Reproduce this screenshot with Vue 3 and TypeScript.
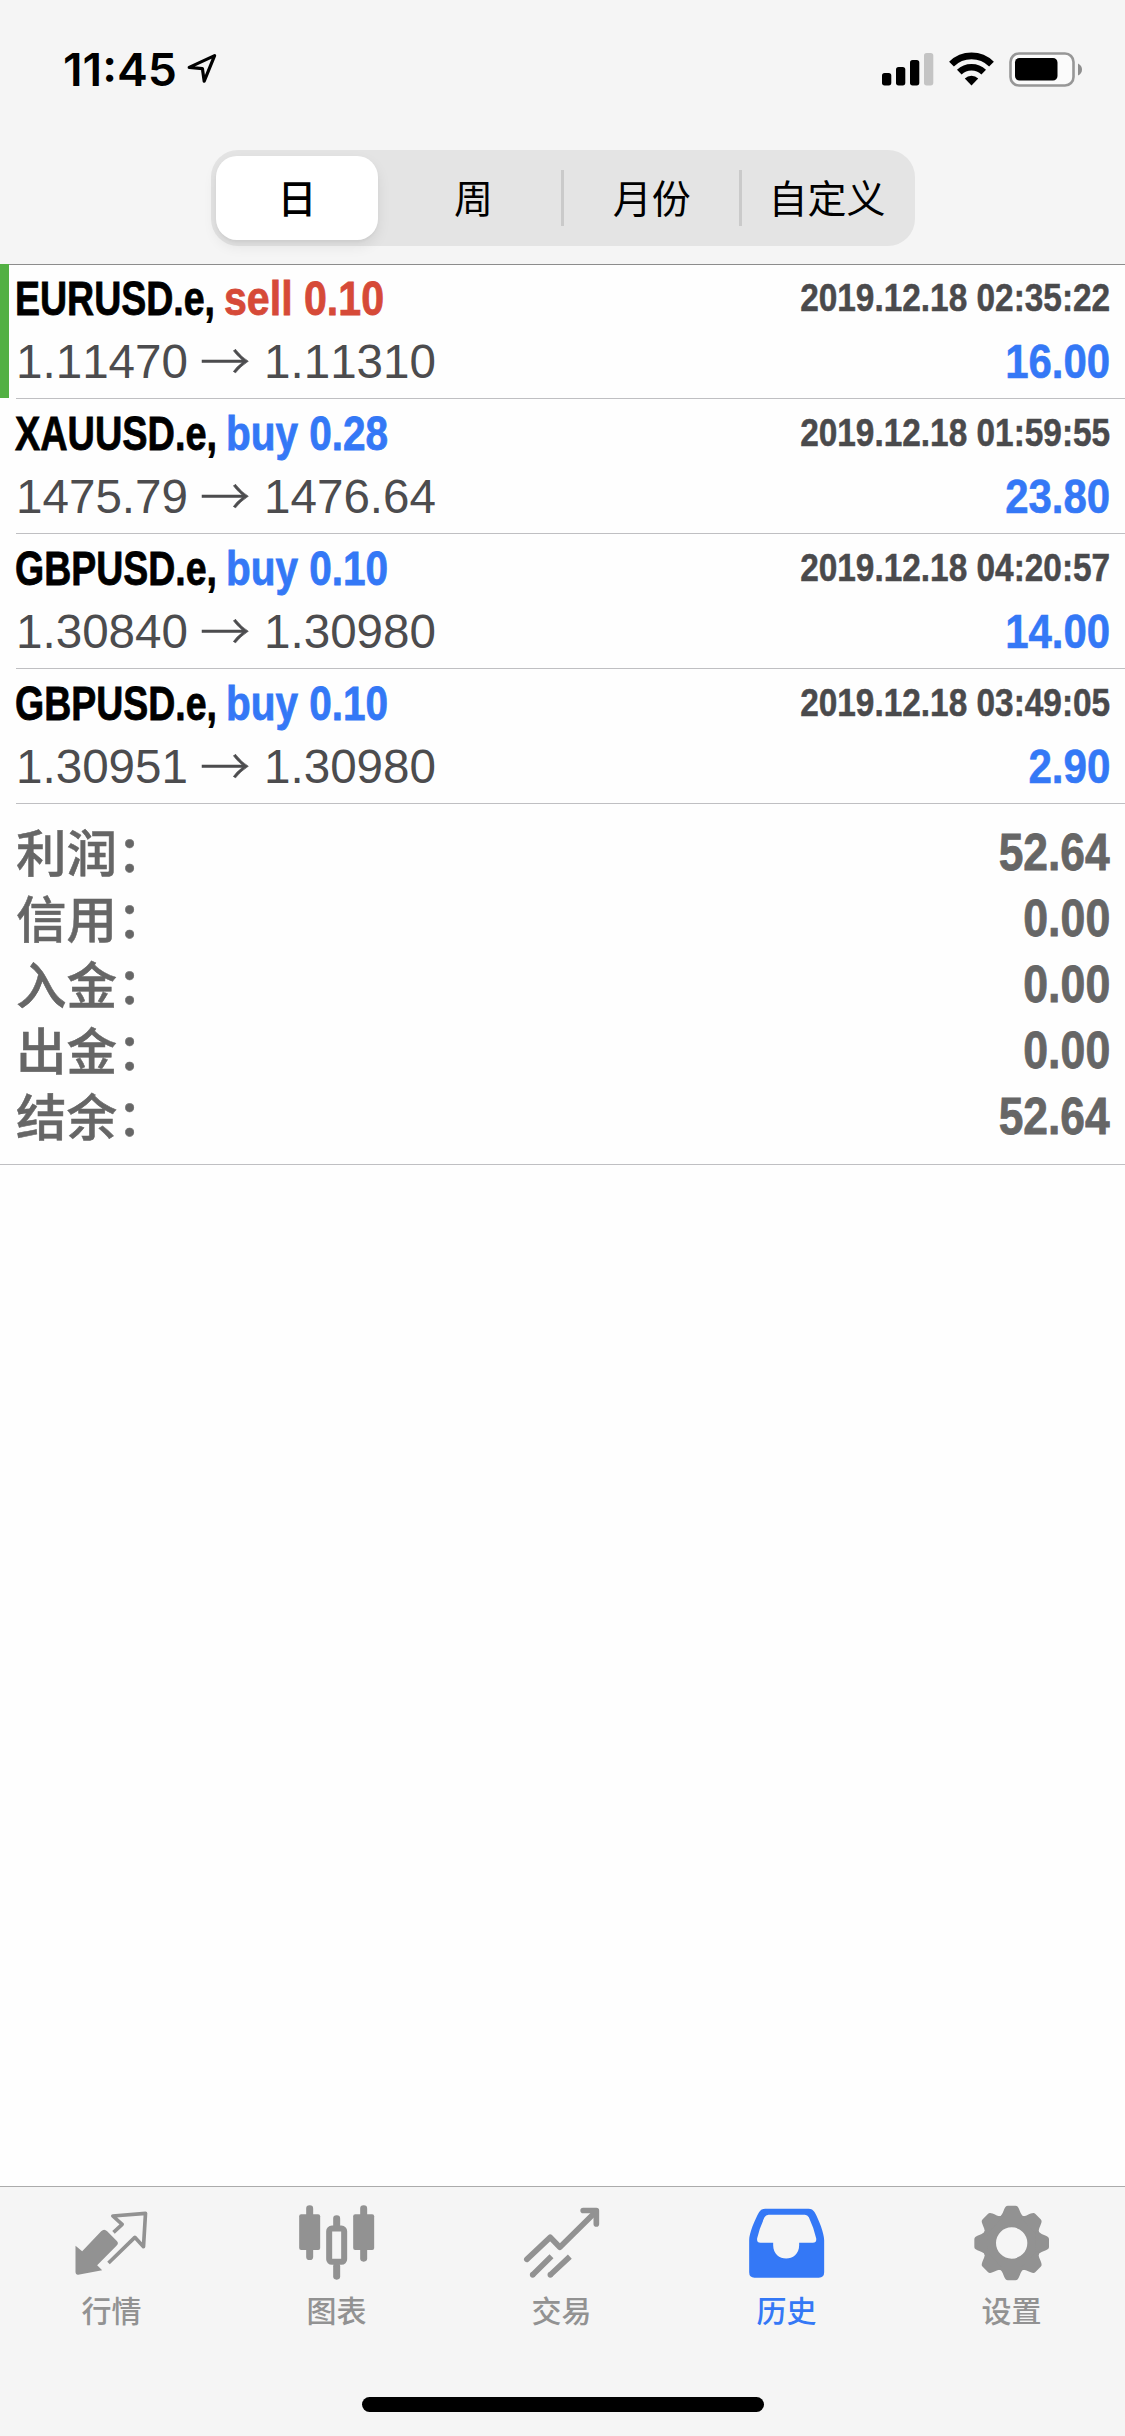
<script setup lang="ts">
import { ref } from 'vue'
import type { Directive } from 'vue'

interface Deal {
  symbol: string
  symbolWidth: number
  side: 'buy' | 'sell'
  volume: string
  actionWidth: number
  open: string
  close: string
  time: string
  profit: string
  profitWidth: number
  marked?: boolean
}

interface TotalRow {
  label: string
  value: string
  width: number
}

const deals: Deal[] = [
  { symbol: 'EURUSD.e,', symbolWidth: 200, side: 'sell', volume: '0.10', actionWidth: 160, open: '1.11470', close: '1.11310', time: '2019.12.18 02:35:22', profit: '16.00', profitWidth: 105, marked: true },
  { symbol: 'XAUUSD.e,', symbolWidth: 202, side: 'buy', volume: '0.28', actionWidth: 162, open: '1475.79', close: '1476.64', time: '2019.12.18 01:59:55', profit: '23.80', profitWidth: 105 },
  { symbol: 'GBPUSD.e,', symbolWidth: 202, side: 'buy', volume: '0.10', actionWidth: 162, open: '1.30840', close: '1.30980', time: '2019.12.18 04:20:57', profit: '14.00', profitWidth: 105 },
  { symbol: 'GBPUSD.e,', symbolWidth: 202, side: 'buy', volume: '0.10', actionWidth: 162, open: '1.30951', close: '1.30980', time: '2019.12.18 03:49:05', profit: '2.90', profitWidth: 82 },
]

const totals: TotalRow[] = [
  { label: '利润：', value: '52.64', width: 111 },
  { label: '信用：', value: '0.00', width: 87 },
  { label: '入金：', value: '0.00', width: 87 },
  { label: '出金：', value: '0.00', width: 87 },
  { label: '结余：', value: '52.64', width: 111 },
]

const periods = ['日', '周', '月份', '自定义']
const activePeriod = ref(0)

const toothAngles = [0, 45, 90, 135, 180, 225, 270, 315]

/* Condenses a piece of text horizontally to the given width. */
const vFit: Directive<HTMLElement, number> = {
  mounted(el, binding) {
    const natural = el.getBoundingClientRect().width
    if (!natural) return
    const side = binding.modifiers.end ? 'left' : 'right'
    el.style.transformOrigin = binding.modifiers.end ? '100% 50%' : '0 50%'
    el.style.transform = `scaleX(${binding.value / natural})`
    el.style.setProperty(`margin-${side}`, `${binding.value - natural}px`)
  },
}
</script>

<template>
  <div class="screen">
    <header class="top">
      <div class="status">
        <div class="status-left">
          <span v-fit="114" class="clock">11:45</span>
          <svg class="loc" width="31" height="31" viewBox="0 0 31 31">
            <path d="M2.2 14.4 L27.6 2.6 L17.2 28.2 L15.4 15.6 Z" fill="none" stroke="#000" stroke-width="3.2" stroke-linejoin="round" />
          </svg>
        </div>
        <div class="status-right">
          <svg width="52" height="34" viewBox="0 0 52 34">
            <rect x="0" y="21" width="9.3" height="12.4" rx="2.6" />
            <rect x="14" y="15" width="9.3" height="18.4" rx="2.6" />
            <rect x="28" y="8" width="9.3" height="25.4" rx="2.6" />
            <rect x="42" y="1" width="9.3" height="32.4" rx="2.6" fill="#c4c4c4" />
          </svg>
          <svg class="wifi" width="45" height="34" viewBox="0 0 45 34">
            <path d="M2.5 12.1 A28.5 28.5 0 0 1 42.5 12.1" fill="none" stroke="#000" stroke-width="6.8" />
            <path d="M10.3 20.2 A17.5 17.5 0 0 1 34.7 20.2" fill="none" stroke="#000" stroke-width="6.6" />
            <path d="M22.5 33.5 L15.8 26.4 A9.8 9.8 0 0 1 29.2 26.4 Z" />
          </svg>
          <svg class="battery" width="74" height="35" viewBox="0 0 74 35">
            <rect x="1.5" y="1.5" width="63" height="32" rx="8.5" fill="#fbfbfb" stroke="#979797" stroke-width="2.6" />
            <rect x="6" y="6" width="42.5" height="22.6" rx="4.5" />
            <path d="M69 11.5 Q73 13.5 73 17.5 Q73 21.5 69 23.5 Z" fill="#8e8e8e" />
          </svg>
        </div>
      </div>
      <nav class="segments">
        <button
          v-for="(period, i) in periods"
          :key="period"
          type="button"
          class="segment"
          :class="{ active: i === activePeriod, divided: i > activePeriod + 1 }"
          @click="activePeriod = i"
        >
          <span>{{ period }}</span>
        </button>
      </nav>
    </header>

    <main class="content">
      <section class="deals">
        <article v-for="(deal, i) in deals" :key="i" class="deal" :class="{ marked: deal.marked }">
          <div class="bar"></div>
          <div class="deal-body">
            <div class="line first">
              <div class="title">
                <span v-fit="deal.symbolWidth" class="symbol">{{ deal.symbol }}</span>
                <span v-fit="deal.actionWidth" class="action" :class="deal.side">{{ deal.side }} {{ deal.volume }}</span>
              </div>
              <span v-fit.end="310" class="time">{{ deal.time }}</span>
            </div>
            <div class="line second">
              <div class="prices">
                <span v-fit="172">{{ deal.open }}</span>
                <span class="arrow">→</span>
                <span v-fit="172">{{ deal.close }}</span>
              </div>
              <span v-fit.end="deal.profitWidth" class="profit">{{ deal.profit }}</span>
            </div>
          </div>
        </article>
      </section>

      <section class="totals">
        <div v-for="row in totals" :key="row.label" class="total">
          <span class="total-label">{{ row.label }}</span>
          <span v-fit.end="row.width" class="total-value">{{ row.value }}</span>
        </div>
      </section>
    </main>

    <footer class="bottom">
      <nav class="tabs">
        <a class="tab">
          <svg width="80" height="80" viewBox="215.5 100 240 240">
            <path d="M226 228 L246 245 L303 185 Q312 176 321 185 L350 214 Q357 221 349 228 L291 287 L306 302 L234 315 Q226 316 226 308 Z" fill="currentColor" />
            <path d="M340 188 L366 164 L338 139 L436 131 L430 231 L404 203 L325 280" fill="none" stroke="currentColor" stroke-width="11" stroke-linejoin="round" />
          </svg>
          <span>行情</span>
        </a>
        <a class="tab">
          <svg width="80" height="80" viewBox="890.5 100 240 240" fill="currentColor">
            <rect x="918" y="107" width="21" height="164" rx="10" />
            <rect x="897" y="134" width="63" height="107" rx="6" />
            <rect x="1080" y="107" width="21" height="169" rx="10" />
            <rect x="1059" y="134" width="63" height="107" rx="6" />
            <rect x="999" y="137" width="21" height="40" rx="10" />
            <rect x="999" y="280" width="21" height="50" rx="10" />
            <rect x="987" y="176.500" width="45" height="100" rx="8" fill="none" stroke="currentColor" stroke-width="18" />
          </svg>
          <span>图表</span>
        </a>
        <a class="tab">
          <svg width="80" height="80" viewBox="365.5 100 240 240" fill="none" stroke="currentColor" stroke-width="17">
            <path d="M380 269 L450 203 L479 233 L586 127" stroke-linejoin="round" stroke-linecap="round" />
            <path d="M549 122.500 H588.500 V163" stroke-linejoin="round" stroke-linecap="round" />
            <path d="M397 316 L454 260 M450 316 L509 261" />
            <circle cx="397.500" cy="315.500" r="8.500" fill="currentColor" stroke="none" />
            <circle cx="450.500" cy="315.500" r="8.500" fill="currentColor" stroke="none" />
          </svg>
          <span>交易</span>
        </a>
        <a class="tab selected">
          <svg width="80" height="80" viewBox="140.500 100 240 240" fill="currentColor">
            <path
              fill-rule="evenodd"
              d="M147 212 C147 190 164 150 177 127 Q183 117 195 117 H325 Q337 117 343 127 C356 150 372 190 372 212 V308 Q372 324 356 324 H163 Q147 324 147 308 Z M205 135 Q197 135 193 143 Q178 175 171 206 Q169 219 181 219 H219 V227 C219 280 297 280 297 227 V219 H338 Q350 219 348 206 Q341 175 326 143 Q322 135 314 135 Z"
            />
          </svg>
          <span>历史</span>
        </a>
        <a class="tab">
          <svg width="80" height="80" viewBox="-119 -120 240 240" fill="currentColor">
            <circle r="67.500" fill="none" stroke="currentColor" stroke-width="41" />
            <path
              v-for="angle in toothAngles"
              :key="angle"
              :transform="`rotate(${angle})`"
              d="M-38 -72 L-38 -79 Q-31 -80 -27 -90 Q-21 -106 -18 -109 Q-16 -112 -11 -112 H11 Q16 -112 18 -109 Q21 -106 27 -90 Q31 -80 38 -79 L38 -72 Z"
            />
          </svg>
          <span>设置</span>
        </a>
      </nav>
      <div class="home"></div>
    </footer>
  </div>
</template>

<style>
body {
  margin: 0;
  background: #fefefe;
}
</style>

<style scoped>
.screen {
  display: flex;
  flex-direction: column;
  width: 1125px;
  height: 2436px;
  overflow: hidden;
  background: #fefefe;
  font-family: "Liberation Sans", "Noto Sans CJK SC", sans-serif;
  font-kerning: none;
}

.top {
  box-sizing: border-box;
  height: 265px;
  flex: none;
  background: #f5f5f5;
  border-bottom: 1px solid #8c8c8c;
}

.status {
  box-sizing: border-box;
  display: flex;
  justify-content: space-between;
  height: 150px;
  padding: 52px 42px 0 63px;
}

.status-left,
.status-right {
  display: flex;
  align-items: flex-start;
}

.clock {
  display: inline-block;
  font-family: Inter, sans-serif;
  font-size: 45px;
  font-weight: 600;
  line-height: 35px;
}

.loc {
  margin: 1px 0 0 10px;
}

.wifi {
  margin-left: 15px;
}

.battery {
  margin-left: 15px;
}

.segments {
  box-sizing: border-box;
  display: flex;
  width: 704px;
  height: 96px;
  margin: 0 0 0 210.5px;
  border-radius: 27px;
  background: #e4e4e4;
}

.segment {
  display: flex;
  flex: 1;
  align-items: center;
  justify-content: center;
  padding: 3px 0 0;
  border: 0;
  background: none;
  color: #000;
  font-family: inherit;
  font-size: 39px;
  line-height: 50px;
}

.segment.active {
  flex: none;
  width: 162px;
  height: 84px;
  margin: 6px 8px 6px 5.5px;
  border-radius: 21px;
  background: #fff;
  box-shadow: 0 6px 14px rgba(0, 0, 0, 0.08), 0 2px 3px rgba(0, 0, 0, 0.04);
  font-weight: 500;
}

.segment.divided {
  background: linear-gradient(#cacaca, #cacaca) 0 20px / 3px 56px no-repeat;
}

.segment.divided:nth-child(3) {
  padding-left: 3px;
}

.content {
  flex: 1;
}

.deals {
  margin-top: -1px;
}

.deal {
  display: flex;
  height: 135px;
}

.bar {
  width: 9px;
  height: 134px;
}

.marked .bar {
  background: #52b043;
}

.deal-body {
  box-sizing: border-box;
  flex: 1;
  margin-left: 7px;
  padding-right: 15px;
  border-bottom: 1px solid #bfbfc2;
}

.line {
  display: flex;
  justify-content: space-between;
  font-size: 48px;
  white-space: nowrap;
}

.line span {
  display: inline-block;
}

.first {
  height: 69px;
  line-height: 69px;
  font-weight: 700;
}

.title {
  display: flex;
  gap: 9px;
  margin-left: -1px;
}

.symbol,
.action {
  -webkit-text-stroke: 0.8px currentColor;
}

.symbol {
  color: #000;
}

.sell {
  color: #d64a38;
}

.buy {
  color: #3478f6;
}

.time {
  color: #4a4a4c;
  font-size: 39px;
  line-height: 67px;
  -webkit-text-stroke: 0.5px currentColor;
}

.second {
  line-height: 57px;
}

.prices {
  display: flex;
  color: #4c4c4e;
}

.prices .arrow {
  width: 50px;
  margin: 0 14px 0 12px;
  font-family: "Noto Sans CJK SC", sans-serif;
  font-size: 50px;
  font-weight: 300;
  line-height: 51px;
  -webkit-text-stroke: 0.5px currentColor;
}

.profit {
  color: #3478f6;
  font-weight: 700;
  -webkit-text-stroke: 0.6px currentColor;
}

.totals {
  box-sizing: border-box;
  height: 361px;
  padding: 16px 15px 0;
  border-bottom: 1px solid #bfbfc2;
}

.total {
  display: flex;
  justify-content: space-between;
  height: 66px;
  color: #666;
  font-size: 51px;
  line-height: 66px;
}

.total-label {
  margin-left: 1px;
  font-size: 50.5px;
  font-weight: 500;
  line-height: 69px;
  -webkit-text-stroke: 0.5px currentColor;
}

.total-value {
  display: inline-block;
  font-weight: 700;
  -webkit-text-stroke: 0.8px currentColor;
}

.bottom {
  box-sizing: border-box;
  flex: none;
  height: 250px;
  border-top: 1px solid #ababab;
  background: #f5f5f5;
}

.tabs {
  display: flex;
  height: 210px;
  margin: 0 1px 0 -1px;
}

.tab {
  display: flex;
  flex: 1;
  flex-direction: column;
  align-items: center;
  padding-top: 16px;
  color: #929292;
  font-size: 30px;
  font-weight: 500;
  line-height: 40px;
}

.tab span {
  margin-top: 9px;
}

.tab.selected {
  color: #3478f6;
}

.home {
  width: 402px;
  height: 15px;
  margin: 0 auto;
  border-radius: 8px;
  background: #000;
}
</style>
